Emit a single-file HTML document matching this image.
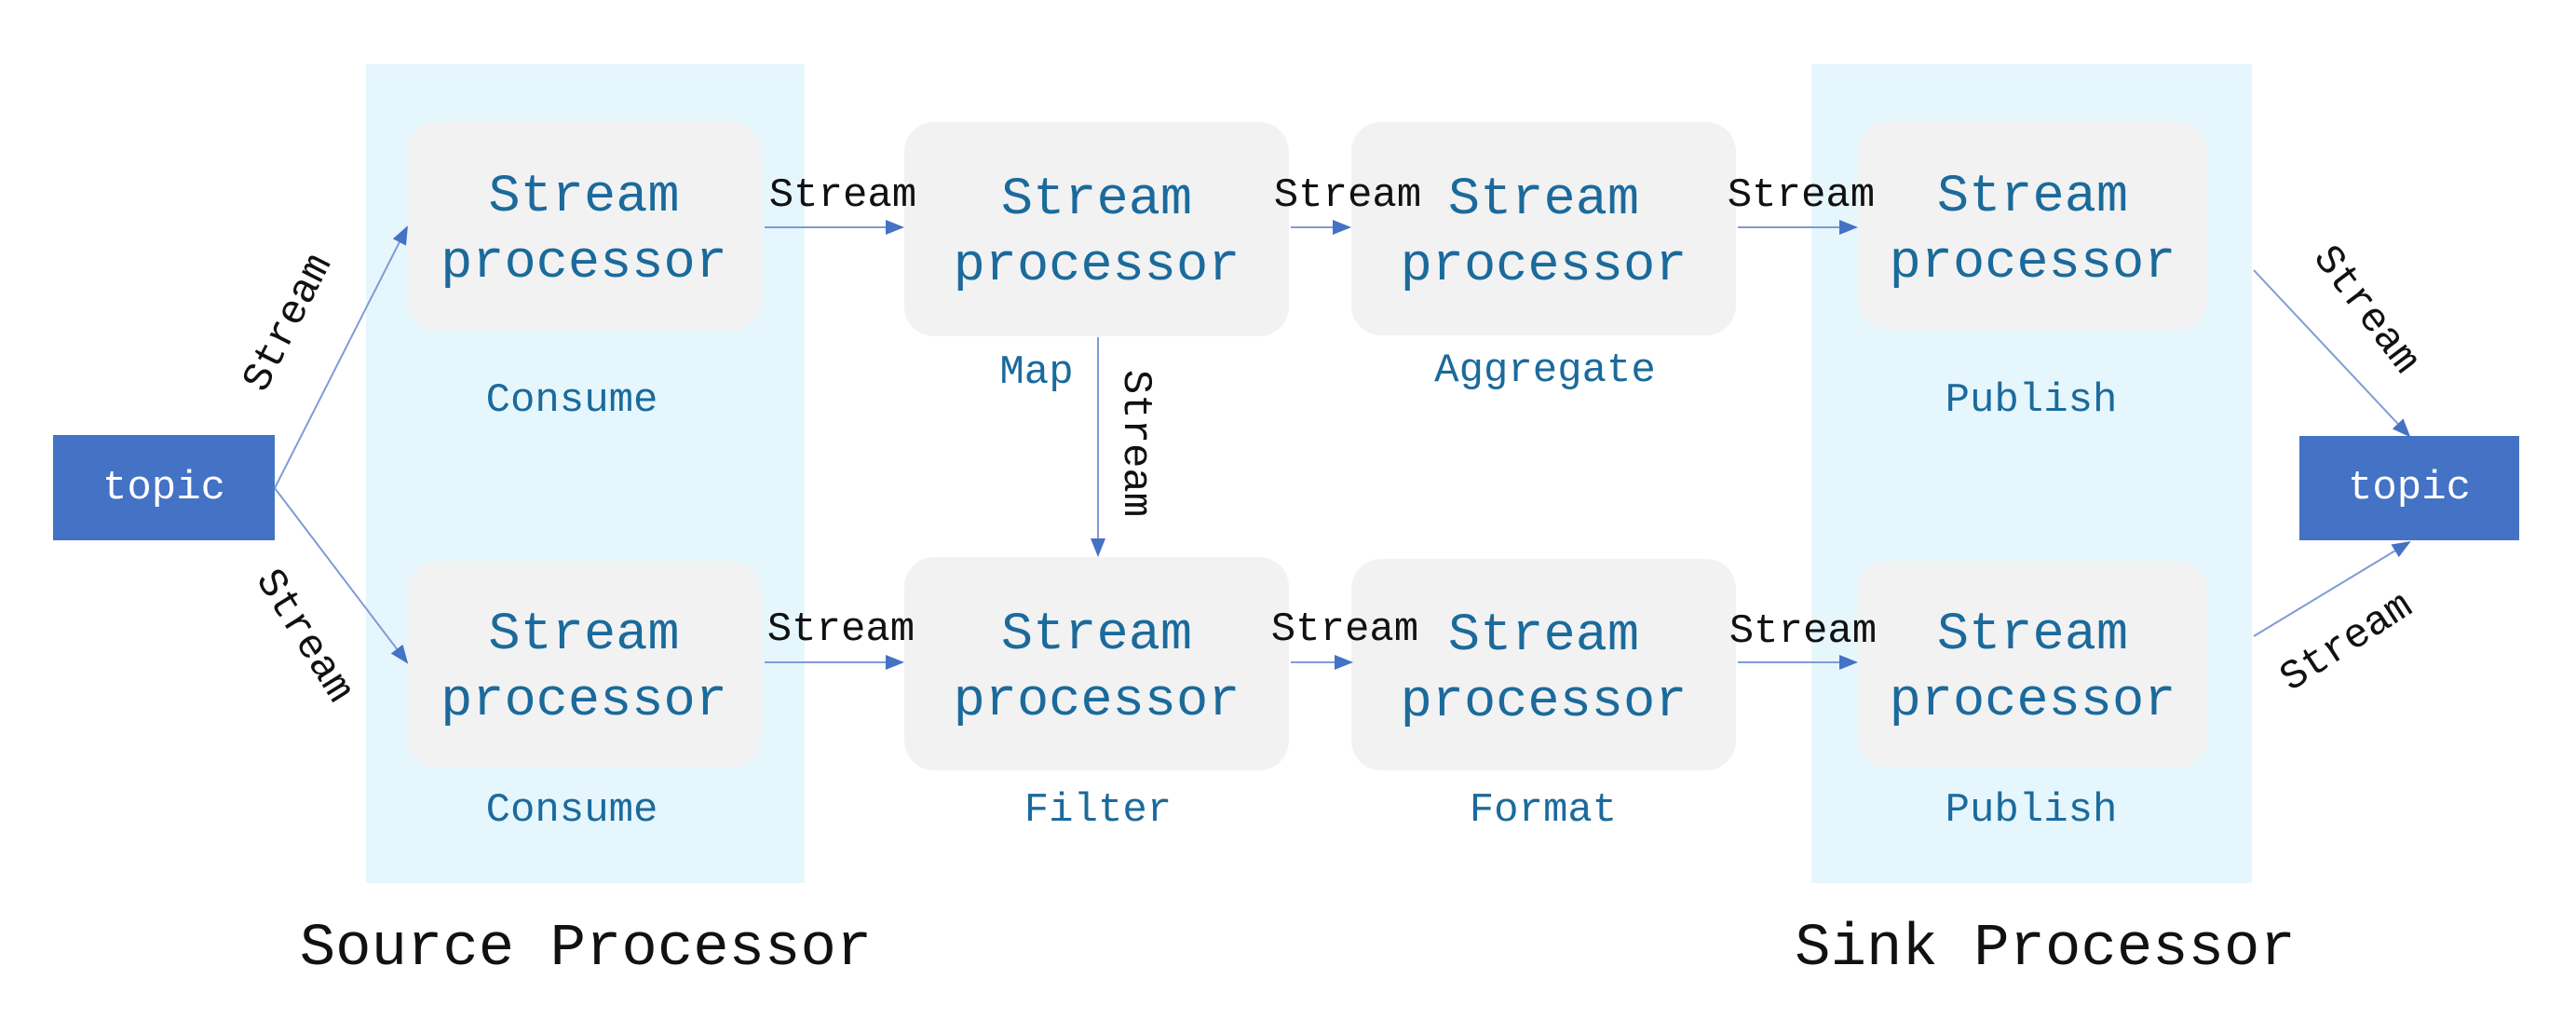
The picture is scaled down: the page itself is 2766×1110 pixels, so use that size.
<!DOCTYPE html>
<html><head><meta charset="utf-8"><style>
*{margin:0;padding:0;box-sizing:border-box}
body{width:2766px;height:1110px;background:#fff;position:relative;overflow:hidden;font-family:"Liberation Mono",monospace}
.abs{position:absolute}
.panel{position:absolute;background:#e6f6fd}
.box{position:absolute;background:#f2f2f2;border-radius:32px;display:flex;align-items:center;justify-content:center;text-align:center;color:#1b6a9c;font-size:57px;line-height:71px;padding-top:10px}
.lbl{position:absolute;color:#1b6a9c;font-size:44px;line-height:50px;transform:translate(-50%,-50%);white-space:nowrap}
.st{position:absolute;color:#111;font-size:44px;line-height:50px;transform:translate(-50%,-50%);white-space:nowrap}
.topic{position:absolute;background:#4472c4;color:#fff;font-size:44px;display:flex;align-items:center;justify-content:center}
.title{position:absolute;color:#111;font-size:64px;transform:translate(-50%,-50%);white-space:nowrap}
</style></head><body>
<div class="panel" style="left:393px;top:69px;width:471px;height:879px"></div>
<div class="panel" style="left:1945px;top:69px;width:473px;height:879px"></div>

<div class="box" style="left:437px;top:131px;width:380px;height:223px">Stream<br>processor</div>
<div class="box" style="left:437px;top:602px;width:380px;height:222px">Stream<br>processor</div>
<div class="box" style="left:971px;top:131px;width:413px;height:230px">Stream<br>processor</div>
<div class="box" style="left:971px;top:598px;width:413px;height:229px">Stream<br>processor</div>
<div class="box" style="left:1451px;top:131px;width:413px;height:229px">Stream<br>processor</div>
<div class="box" style="left:1451px;top:600px;width:413px;height:227px">Stream<br>processor</div>
<div class="box" style="left:1995px;top:131px;width:375px;height:223px">Stream<br>processor</div>
<div class="box" style="left:1995px;top:602px;width:375px;height:222px">Stream<br>processor</div>

<div class="topic" style="left:57px;top:467px;width:238px;height:113px">topic</div>
<div class="topic" style="left:2469px;top:468px;width:236px;height:112px">topic</div>

<div class="lbl" style="left:614px;top:430px">Consume</div>
<div class="lbl" style="left:614px;top:870px">Consume</div>
<div class="lbl" style="left:1113px;top:400px">Map</div>
<div class="lbl" style="left:1179px;top:870px">Filter</div>
<div class="lbl" style="left:1659px;top:398px">Aggregate</div>
<div class="lbl" style="left:1657px;top:870px">Format</div>
<div class="lbl" style="left:2181px;top:430px">Publish</div>
<div class="lbl" style="left:2181px;top:870px">Publish</div>

<svg class="abs" style="left:0;top:0" width="2766" height="1110">
<defs>
<marker id="b" markerWidth="20" markerHeight="20" refX="18" refY="10" orient="auto" markerUnits="userSpaceOnUse" viewBox="0 0 20 20"><path d="M0,2 L20,10 L0,18z" fill="#4472c4"/></marker></defs>
<g stroke="#7f9bd6" stroke-width="2" fill="none" marker-end="url(#b)">
<line x1="295" y1="524" x2="437" y2="244"/>
<line x1="295" y1="524" x2="437" y2="711"/>
<line x1="821" y1="244" x2="969" y2="244"/>
<line x1="821" y1="711" x2="969" y2="711"/>
<line x1="1386" y1="244" x2="1449" y2="244"/>
<line x1="1386" y1="711" x2="1451" y2="711"/>
<line x1="1866" y1="244" x2="1993" y2="244"/>
<line x1="1866" y1="711" x2="1993" y2="711"/>
<line x1="1179" y1="362" x2="1179" y2="596"/>
<line x1="2420" y1="290" x2="2587" y2="468"/>
<line x1="2420" y1="683" x2="2587" y2="582"/>
</g></svg>

<div class="st" style="left:905px;top:210px">Stream</div>
<div class="st" style="left:903px;top:676px">Stream</div>
<div class="st" style="left:1447px;top:210px">Stream</div>
<div class="st" style="left:1444px;top:676px">Stream</div>
<div class="st" style="left:1934px;top:210px">Stream</div>
<div class="st" style="left:1936px;top:678px">Stream</div>
<div class="st" style="left:1219px;top:476px;transform:translate(-50%,-50%) rotate(90deg)">Stream</div>
<div class="st" style="left:310px;top:347px;transform:translate(-50%,-50%) rotate(-63deg)">Stream</div>
<div class="st" style="left:326px;top:683px;transform:translate(-50%,-50%) rotate(58deg)">Stream</div>
<div class="st" style="left:2540px;top:333px;transform:translate(-50%,-50%) rotate(53deg)">Stream</div>
<div class="st" style="left:2520px;top:690px;transform:translate(-50%,-50%) rotate(-33deg)">Stream</div>

<div class="title" style="left:629px;top:1019px">Source Processor</div>
<div class="title" style="left:2196px;top:1019px">Sink Processor</div>
</body></html>
